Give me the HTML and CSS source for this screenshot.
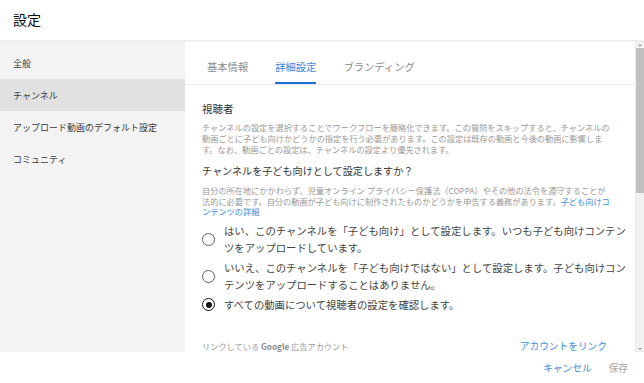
FILE: index.html
```html
<!DOCTYPE html>
<html lang="ja">
<head>
<meta charset="utf-8">
<title>設定</title>
<link rel="stylesheet" href="styles.css">
</head>
<body>
<div class="dialog">
  <header class="header">設定</header>
  <div class="body">
    <nav class="sidebar">
      <div class="nav-item">全般</div>
      <div class="nav-item active">チャンネル</div>
      <div class="nav-item">アップロード動画のデフォルト設定</div>
      <div class="nav-item">コミュニティ</div>
    </nav>
    <main class="panel">
      <div class="scroller">
        <div class="tabs">
          <div class="tab">基本情報</div>
          <div class="tab active">詳細設定</div>
          <div class="tab">ブランディング</div>
        </div>
        <section class="section">
          <h2 class="section-title">視聴者</h2>
          <p class="desc">チャンネルの設定を選択することでワークフローを簡略化できます。この質問をスキップすると、チャンネルの<br>動画ごとに子ども向けかどうかの指定を行う必要があります。この設定は既存の動画と今後の動画に影響しま<br>す。なお、動画ごとの設定は、チャンネルの設定より優先されます。</p>
          <h3 class="question">チャンネルを子ども向けとして設定しますか？</h3>
          <p class="desc desc-2">自分の所在地にかかわらず、児童オンライン プライバシー保護法（COPPA）やその他の法令を遵守することが<br>法的に必要です。自分の動画が子ども向けに制作されたものかどうかを申告する義務があります。<a class="link" href="#">子ども向けコ<br>ンテンツの詳細</a></p>
          <div class="options">
            <label class="option"><span class="radio"></span><span class="option-text">はい、このチャンネルを「子ども向け」として設定します。いつも子ども向けコンテン<br>ツをアップロードしています。</span></label>
            <label class="option"><span class="radio"></span><span class="option-text">いいえ、このチャンネルを「子ども向けではない」として設定します。子ども向けコン<br>テンツをアップロードすることはありません。</span></label>
            <label class="option"><span class="radio checked"></span><span class="option-text">すべての動画について視聴者の設定を確認します。</span></label>
          </div>
          <div class="ads-row">
            <span class="ads-label">リンクしている <b>Google</b> 広告アカウント</span>
            <a class="ads-link" href="#">アカウントをリンク</a>
          </div>
        </section>
      </div>
      <div class="scrollbar">
        <span class="arrow up"></span>
        <span class="track"><span class="thumb"></span></span>
        <span class="arrow down"></span>
      </div>
    </main>
  </div>
  <footer class="footer">
    <button class="btn btn-cancel">キャンセル</button>
    <button class="btn btn-save">保存</button>
  </footer>
</div>
</body>
</html>
```

FILE: styles.css
```css
* { box-sizing: border-box; }
html, body {
  margin: 0;
  padding: 0;
  width: 644px;
  height: 383px;
  overflow: hidden;
  background: #fff;
  font-family: "Noto Sans CJK JP", "Noto Sans", sans-serif;
}
.dialog {
  display: flex;
  flex-direction: column;
  height: 383px;
}
.header {
  height: 42px;
  flex: none;
  display: flex;
  align-items: center;
  padding: 0 0 2px 13px;
  font-size: 14px;
  color: #0d0d0d;
  border-bottom: 2px solid #efefef;
}
.body {
  flex: 1;
  display: flex;
  min-height: 0;
}
.sidebar {
  width: 185px;
  flex: none;
  background: #f3f3f3;
  padding-top: 5px;
}
.nav-item {
  height: 32px;
  display: flex;
  align-items: center;
  padding-left: 13px;
  font-size: 9px;
  color: #3a3a3a;
}
.nav-item.active { background: #e1e1e1; }
.panel {
  flex: 1;
  display: flex;
  min-width: 0;
}
.scroller {
  flex: 1;
  overflow: hidden;
  background: #fff;
  border-right: 1px solid #ececec;
}
.tabs {
  display: flex;
  gap: 27px;
  padding-left: 22px;
  height: 43px;
  border-bottom: 1px solid #ececec;
}
.tab {
  height: 42px;
  padding-top: 8px;
  display: flex;
  align-items: center;
  font-size: 10.3px;
  color: #8c8c8c;
  border-bottom: 2px solid transparent;
}
.tab.active {
  color: #3b84da;
  border-bottom-color: #1a6fd8;
}
.section {
  padding: 0 10px 0 17px;
}
.section-title {
  margin: 17px 0 0;
  font-size: 10.5px;
  line-height: 14px;
  font-weight: normal;
  color: #333;
}
.desc {
  margin: 6px 0 0;
  font-size: 8.2px;
  line-height: 11px;
  color: #999;
  white-space: nowrap;
}
.question {
  margin: 9px 0 0;
  font-size: 10.1px;
  line-height: 14px;
  font-weight: normal;
  color: #333;
}
.desc-2 { margin-top: 7px; line-height: 10.7px; }
.link { color: #3e8ee0; text-decoration: none; }
.options {
  margin-top: 5px;
  display: flex;
  flex-direction: column;
  gap: 3px;
}
.option {
  display: flex;
  align-items: center;
  gap: 9px;
}
.radio {
  flex: none;
  width: 13px;
  height: 13px;
  border: 1.6px solid #5f5f5f;
  border-radius: 50%;
  display: flex;
  align-items: center;
  justify-content: center;
}
.radio.checked { border-color: #111; }
.radio.checked::after {
  content: "";
  width: 6px;
  height: 6px;
  border-radius: 50%;
  background: #111;
}
.option-text {
  font-size: 10.35px;
  line-height: 17px;
  color: #444;
  white-space: nowrap;
}
.ads-row {
  margin-top: 26px;
  display: flex;
  align-items: center;
  justify-content: space-between;
  padding-right: 18px;
  height: 14px;
}
.ads-label { font-size: 8.2px; color: #9a9a9a; }
.ads-label b { font-weight: bold; color: #8a8a8a; }
.ads-link { font-size: 9.7px; color: #3e8ee0; text-decoration: none; }
.scrollbar {
  width: 8px;
  flex: none;
  background: #f1f1f1;
  display: flex;
  flex-direction: column;
  align-items: center;
}
.arrow {
  flex: none;
  height: 6px;
  width: 8px;
  display: flex;
  align-items: center;
  justify-content: center;
}
.arrow::after {
  content: "";
  width: 0;
  height: 0;
  border-left: 2px solid transparent;
  border-right: 2px solid transparent;
}
.arrow.up::after { border-bottom: 2px solid #a0a0a0; }
.arrow.down::after { border-top: 2px solid #a0a0a0; }
.track {
  flex: 1;
  width: 8px;
}
.thumb {
  display: block;
  width: 8px;
  height: 145px;
  background: #c1c1c1;
}
.footer {
  height: 31px;
  flex: none;
  display: flex;
  justify-content: flex-end;
  align-items: center;
  gap: 17px;
  padding-right: 16px;
  background: #fff;
}
.btn {
  border: none;
  background: none;
  padding: 0;
  font-family: inherit;
  font-size: 9.7px;
}
.btn-cancel { color: #3e86da; }
.btn-save { color: #a8a8a8; }
```
